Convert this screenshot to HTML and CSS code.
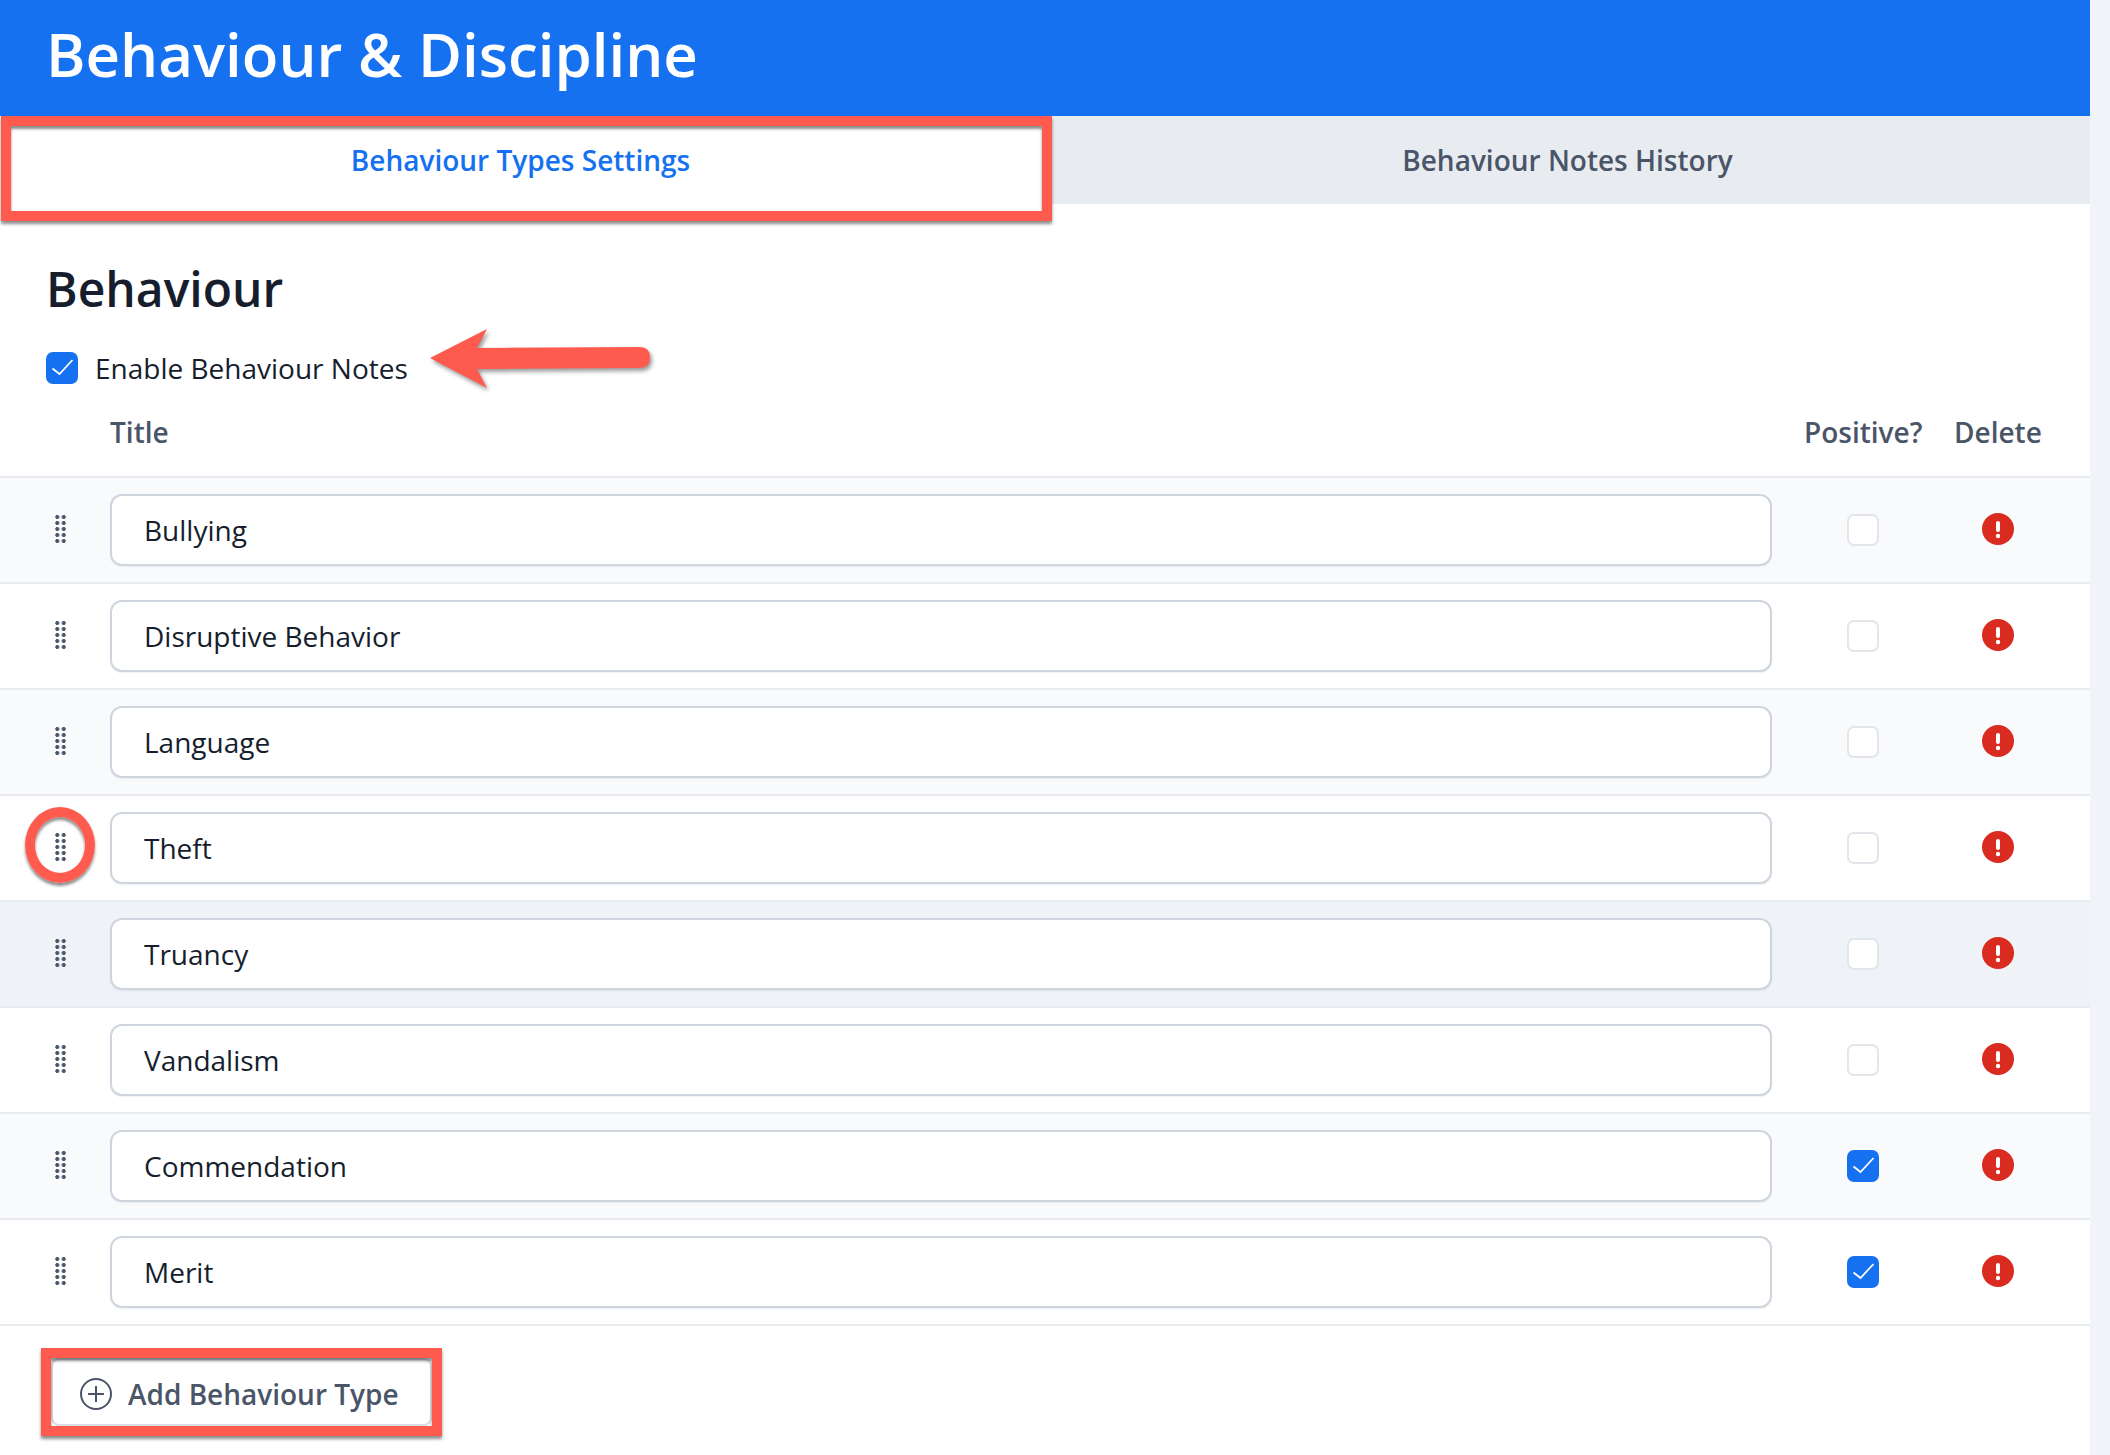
FILE: index.html
```html
<!DOCTYPE html>
<html lang="en">
<head>
<meta charset="utf-8">
<title>Behaviour &amp; Discipline</title>
<link rel="stylesheet" href="styles.css">
</head>
<body>
<main class="page">
  <header class="banner"><h1>Behaviour &amp; Discipline</h1></header>
  <nav class="tabs">
    <div class="tab active">Behaviour Types Settings</div>
    <div class="tab">Behaviour Notes History</div>
  </nav>
  <section class="content">
    <h2>Behaviour</h2>
    <label class="enable"><span class="check on"><svg viewBox="0 0 32 32"><path d="M6.500 16.500l7 5.500L26.500 8"/></svg></span>Enable Behaviour Notes</label>
    <div class="head"><span class="col-title">Title</span><span class="col-pos">Positive?</span><span class="col-del">Delete</span></div>
    <div class="rows">
      <div class="row alt"><span class="grip"><i></i></span><div class="input">Bullying</div><div class="cell-pos"><span class="check"></span></div><div class="cell-del"><svg class="del" viewBox="0 0 32 32"><circle cx="16" cy="16" r="16"/><rect x="14" y="8" width="4" height="11" rx="2"/><circle cx="16" cy="23" r="2.2"/></svg></div></div>
      <div class="row"><span class="grip"><i></i></span><div class="input">Disruptive Behavior</div><div class="cell-pos"><span class="check"></span></div><div class="cell-del"><svg class="del" viewBox="0 0 32 32"><circle cx="16" cy="16" r="16"/><rect x="14" y="8" width="4" height="11" rx="2"/><circle cx="16" cy="23" r="2.2"/></svg></div></div>
      <div class="row alt"><span class="grip"><i></i></span><div class="input">Language</div><div class="cell-pos"><span class="check"></span></div><div class="cell-del"><svg class="del" viewBox="0 0 32 32"><circle cx="16" cy="16" r="16"/><rect x="14" y="8" width="4" height="11" rx="2"/><circle cx="16" cy="23" r="2.2"/></svg></div></div>
      <div class="row"><span class="grip"><i></i></span><div class="input">Theft</div><div class="cell-pos"><span class="check"></span></div><div class="cell-del"><svg class="del" viewBox="0 0 32 32"><circle cx="16" cy="16" r="16"/><rect x="14" y="8" width="4" height="11" rx="2"/><circle cx="16" cy="23" r="2.2"/></svg></div></div>
      <div class="row hover"><span class="grip"><i></i></span><div class="input">Truancy</div><div class="cell-pos"><span class="check"></span></div><div class="cell-del"><svg class="del" viewBox="0 0 32 32"><circle cx="16" cy="16" r="16"/><rect x="14" y="8" width="4" height="11" rx="2"/><circle cx="16" cy="23" r="2.2"/></svg></div></div>
      <div class="row"><span class="grip"><i></i></span><div class="input">Vandalism</div><div class="cell-pos"><span class="check"></span></div><div class="cell-del"><svg class="del" viewBox="0 0 32 32"><circle cx="16" cy="16" r="16"/><rect x="14" y="8" width="4" height="11" rx="2"/><circle cx="16" cy="23" r="2.2"/></svg></div></div>
      <div class="row alt"><span class="grip"><i></i></span><div class="input">Commendation</div><div class="cell-pos"><span class="check on"><svg viewBox="0 0 32 32"><path d="M6.500 16.500l7 5.500L26.500 8"/></svg></span></div><div class="cell-del"><svg class="del" viewBox="0 0 32 32"><circle cx="16" cy="16" r="16"/><rect x="14" y="8" width="4" height="11" rx="2"/><circle cx="16" cy="23" r="2.2"/></svg></div></div>
      <div class="row"><span class="grip"><i></i></span><div class="input">Merit</div><div class="cell-pos"><span class="check on"><svg viewBox="0 0 32 32"><path d="M6.500 16.500l7 5.500L26.500 8"/></svg></span></div><div class="cell-del"><svg class="del" viewBox="0 0 32 32"><circle cx="16" cy="16" r="16"/><rect x="14" y="8" width="4" height="11" rx="2"/><circle cx="16" cy="23" r="2.2"/></svg></div></div>
    </div>
    <div class="actions">
      <button class="add"><svg viewBox="0 0 32 32"><circle cx="16" cy="16" r="15"/><path d="M16 8v16M8 16h16"/></svg>Add Behaviour Type</button>
    </div>
  </section>
</main>
<div class="mark mark-tab"></div>
<div class="mark mark-grip"></div>
<div class="mark mark-add"></div>
<svg class="arrow" viewBox="0 0 240 80"><path d="M10 38 L67 9 L57 28 L220 27 Q230 27 230 37.500 Q230 48 220 48 L57 49 L67 68 Z"/></svg>
</body>
</html>
```
FILE: styles.css
```css
* { box-sizing: border-box; }
html, body { margin: 0; padding: 0; }
body { background: #f0f4f8; font-family: "Open Sans", "Noto Sans", sans-serif; color: #161e2e; height: 1455px; overflow: hidden; position: relative; }
.page { width: 2090px; height: 1455px; background: #fff; }
.banner { height: 116px; background: #1671f0; padding: 0 0 9px 46px; display: flex; align-items: center; }
.banner h1 { margin: 0; color: #fff; font-size: 60px; font-weight: 600; line-height: 1; }
.tabs { display: flex; height: 88px; }
.tab { flex: 1; display: flex; align-items: center; justify-content: center; padding-right: 2px; font-size: 28px; font-weight: 600; color: #4a5568; background: #e8ecf1; }
.tab.active { background: #fff; color: #1671f0; padding-right: 6px; }
h2 { margin: 0; padding: 51px 0 0 46px; font-size: 48px; font-weight: 600; line-height: 68px; color: #161e2e; }
.enable { display: flex; align-items: center; gap: 17px; margin: 26px 0 0 46px; height: 38px; font-size: 28px; line-height: 38px; }
.check { display: block; width: 32px; height: 32px; border-radius: 7px; border: 2px solid #e2e6ea; background: #fff; flex: none; }
.check.on { background: #1671f0; border: 0; }
.check svg { display: block; width: 32px; height: 32px; }
.check path { fill: none; stroke: #fff; stroke-width: 1.8; }
.head { display: flex; align-items: center; height: 91px; font-size: 28px; font-weight: 600; color: #4a5568; padding-left: 110px; border-bottom: 2px solid #e8ecf1; }
.col-title { flex: 1; }
.col-pos { width: 117px; margin-right: 33px; }
.col-del { width: 86px; margin-right: 50px; }
.row { display: flex; align-items: center; height: 106px; border-bottom: 2px solid #e8ecf1; background: #fff; }
.row.alt { background: #f8fafc; }
.row.hover { background: #eff3f7; }
.grip { width: 110px; display: flex; padding: 0 0 2px 54px; }
.grip i { display: block; width: 13px; height: 30px; background-image: radial-gradient(circle, #4a5568 1.7px, transparent 2.3px); background-size: 6.5px 6px; }
.input { width: 1662px; height: 72px; margin-bottom: 1px; display: flex; align-items: center; padding: 1px 0 0 32px; font-size: 28px; color: #161e2e; background: #fff; border: 2px solid #cfd5df; border-radius: 12px; box-shadow: 0 1px 2px rgba(0,0,0,.06); }
.cell-pos { margin-left: 75px; width: 32px; }
.cell-del { margin-left: 103px; width: 32px; height: 32px; margin-top: -2px; }
.del { display: block; width: 32px; height: 32px; }
.del circle:first-child { fill: #d92b1f; }
.del rect, .del circle + rect + circle { fill: #fff; }
.actions { padding: 32px 0 0 51px; }
.add { display: flex; align-items: center; gap: 16px; width: 381px; height: 68px; padding: 4px 0 0 27px; background: #fff; border: 2px solid #d8dde4; border-radius: 8px; font: 600 28px "Open Sans", "Noto Sans", sans-serif; color: #4a5568; }
.add svg { width: 32px; height: 32px; flex: none; }
.add circle, .add path { fill: none; stroke: #4a5568; stroke-width: 2; }
.mark { position: absolute; border: 10px solid #ff5a4e; box-shadow: 0 3px 3px rgba(0,0,0,.45), inset 0 3px 3px rgba(0,0,0,.45); }
.mark-tab { left: 1px; top: 116px; width: 1051px; height: 105px; }
.mark-grip { left: 25px; top: 807px; width: 70px; height: 76px; border-radius: 50%; }
.mark-add { left: 41px; top: 1348px; width: 401px; height: 88px; }
.arrow { position: absolute; left: 420px; top: 320px; width: 240px; height: 80px; overflow: visible; filter: drop-shadow(2px 3px 2px rgba(0,0,0,.4)); }
.arrow path { fill: #ff5a4e; }
```
